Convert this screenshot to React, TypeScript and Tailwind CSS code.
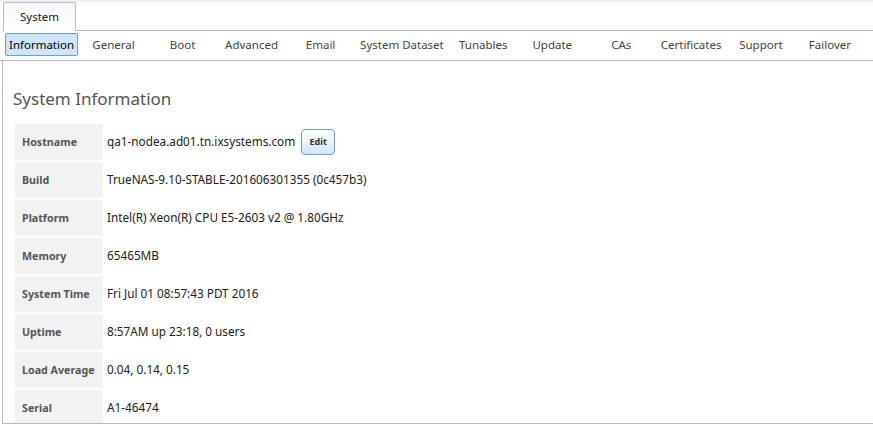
import React from "react";

const subtabs = [
  "Information",
  "General",
  "Boot",
  "Advanced",
  "Email",
  "System Dataset",
  "Tunables",
  "Update",
  "CAs",
  "Certificates",
  "Support",
  "Failover",
];

const rows: [string, string][] = [
  ["Hostname", "qa1-nodea.ad01.tn.ixsystems.com"],
  ["Build", "TrueNAS-9.10-STABLE-201606301355 (0c457b3)"],
  ["Platform", "Intel(R) Xeon(R) CPU E5-2603 v2 @ 1.80GHz"],
  ["Memory", "65465MB"],
  ["System Time", "Fri Jul 01 08:57:43 PDT 2016"],
  ["Uptime", "8:57AM up 23:18, 0 users"],
  ["Load Average", "0.04, 0.14, 0.15"],
  ["Serial", "A1-46474"],
];

export default function App() {
  return (
    <div className="w-[873px] h-[425px] overflow-hidden bg-white font-['Noto_Sans',sans-serif] text-[#222] flex flex-col">
      <div className="h-[2px] bg-[#f0f0f0] shrink-0" />
      <div className="flex h-[29px] shrink-0">
        <div className="w-[3px]" />
        <div className="w-[73px] border border-b-0 border-[#b5bcc7] rounded-t-[2px] bg-gradient-to-b from-[#f4f8fc] to-white flex items-center justify-center text-[11.5px] text-[#222]">
          System
        </div>
        <div className="flex-1 border-b border-[#b5bcc7]" />
      </div>
      <div className="flex h-[30px] shrink-0 border-b border-[#b5bcc7] pl-[5px] pt-[2px] gap-[2px]">
        {subtabs.map((t, i) => (
          <div
            key={t}
            className={
              i === 0
                ? "h-[23px] min-w-[67px] px-[3px] flex items-center justify-center text-[11.5px] text-[#000] bg-[#cfe5fa] border border-[#759dc0] rounded-[2px] whitespace-nowrap"
                : "h-[23px] min-w-[67px] px-[3px] border border-transparent flex items-center justify-center text-[11.5px] text-[#444] whitespace-nowrap"
            }
          >
            {t}
          </div>
        ))}
      </div>
      <div className="flex-1 flex min-h-0">
        <div className="w-[2px] shrink-0" />
        <div className="flex-1 border-l border-b border-[#b5bcc7] overflow-hidden min-h-0 h-[363px] pl-[10px]">
          <div className="pt-[26px] text-[17px] leading-[24px] text-[#555]">System Information</div>
          <div className="mt-[13px] ml-[2px] flex flex-col gap-[2px]">
            {rows.map(([k, v]) => (
              <div key={k} className="flex h-[36px] shrink-0">
                <div className="w-[88px] shrink-0 bg-[#f2f2f2] pl-[7px] flex items-center text-[10.7px] font-bold text-[#555]">
                  {k}
                </div>
                <div className="pl-[4px] flex items-center text-[11.75px] text-[#222] whitespace-nowrap">
                  {v}
                  {k === "Hostname" && (
                    <div className="ml-[6px] w-[34px] h-[26px] rounded-[4px] border border-[#759dc0] bg-gradient-to-b from-white to-[#cfe5fa] flex items-center justify-center text-[9px] font-bold text-[#333]">
                      Edit
                    </div>
                  )}
                </div>
              </div>
            ))}
          </div>
        </div>
      </div>
    </div>
  );
}
